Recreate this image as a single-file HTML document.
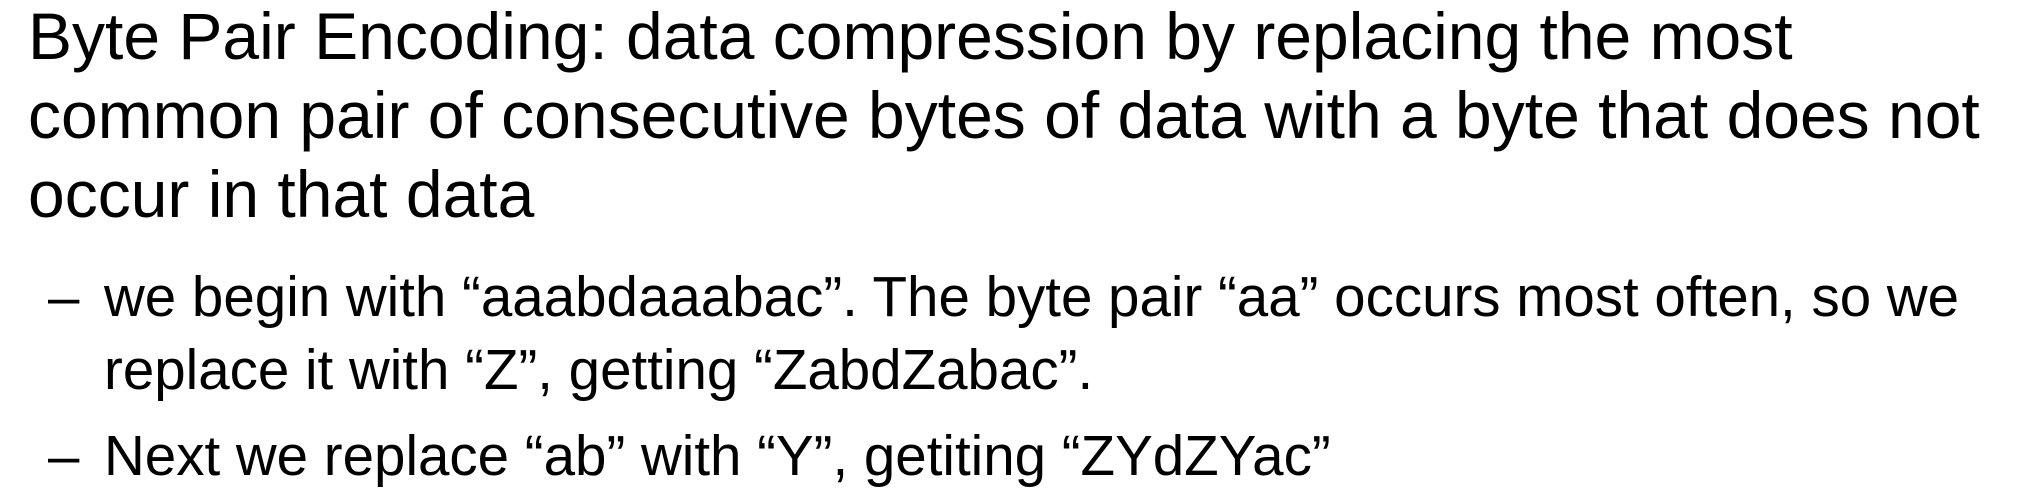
<!DOCTYPE html>
<html><head><meta charset="utf-8"><style>
html,body{margin:0;padding:0;background:#fff;width:2018px;height:500px;overflow:hidden}
body{font-family:"Liberation Sans",Arial,sans-serif;color:#000;position:relative}
.l{position:absolute;white-space:nowrap;line-height:1}
.h{font-size:66px;left:28px}
.b{font-size:56.5px}
</style></head><body>
<div class="l h" style="top:3px">Byte Pair Encoding: data compression by replacing the most</div>
<div class="l h" style="top:82px">common pair of consecutive bytes of data with a byte that does not</div>
<div class="l h" style="top:161px">occur in that data</div>
<div class="l b" style="top:269px;left:48px">–</div>
<div class="l b" style="top:269px;left:104px">we begin with “aaabdaaabac”. The byte pair “aa” occurs most often, so we</div>
<div class="l b" style="top:342px;left:104px">replace it with “Z”, getting “ZabdZabac”.</div>
<div class="l b" style="top:428px;left:48px">–</div>
<div class="l b" style="top:428px;left:104px">Next we replace “ab” with “Y”, getiting “ZYdZYac”</div>
</body></html>
